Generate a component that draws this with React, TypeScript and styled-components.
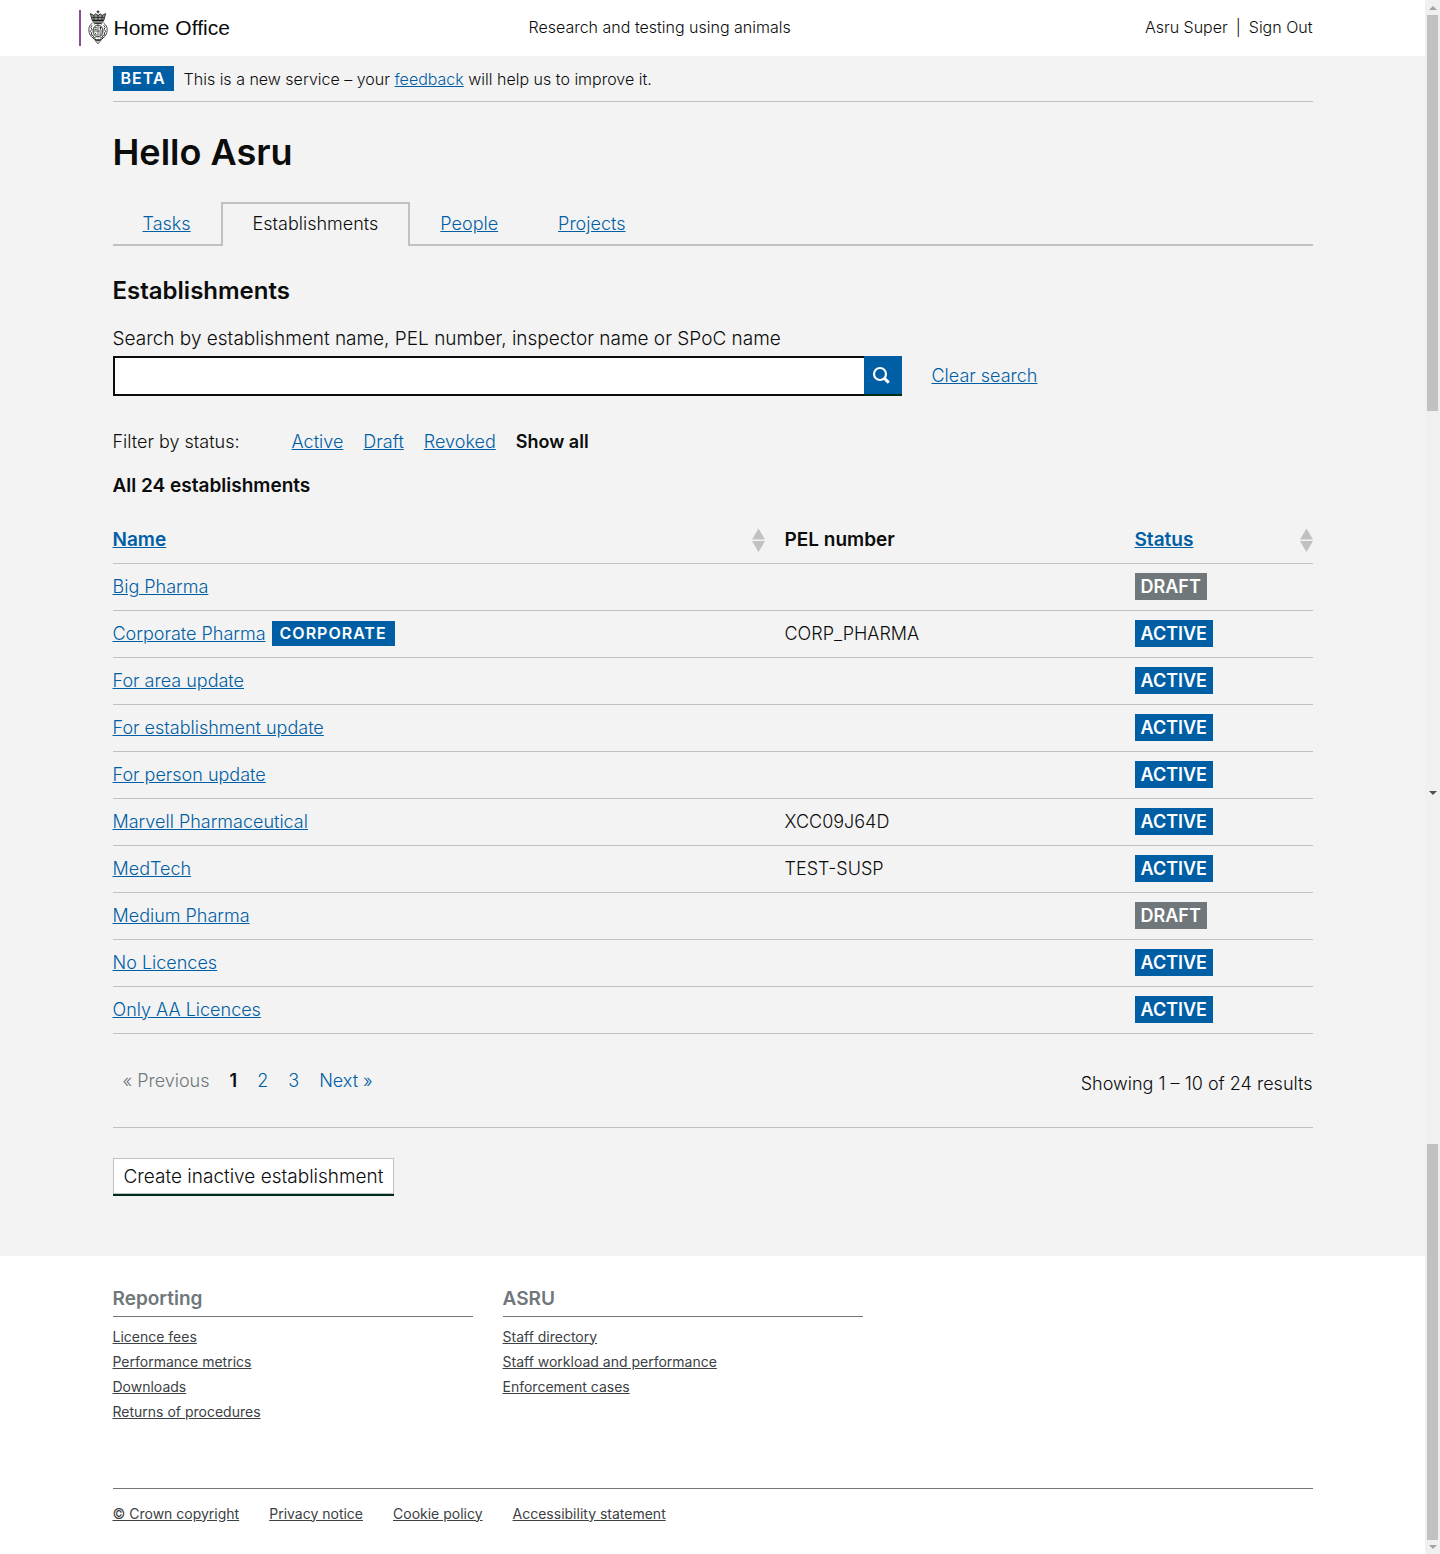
import React from "react";
import styled, { createGlobalStyle, css } from "styled-components";

const ink = "#0b0c0c";
const blue = "#005ea5";
const line = "#bfc1c3";
const grey = "#6f777b";
const canvas = "#f3f3f3";

const GlobalStyle = createGlobalStyle`
  *, *::before, *::after { box-sizing: border-box; }
  body {
    margin: 0;
    background: #fff;
    color: ${ink};
    font-family: Inter, "Liberation Sans", Arial, sans-serif;
    font-size: 18px;
    font-weight: 300;
    line-height: 26px;
  }
  h1, h2, h3, p, ul { margin: 0; padding: 0; }
  ul { list-style: none; }
`;

const Shell = styled.div`
  display: flex;
  align-items: stretch;
`;

const Page = styled.div`
  flex: 1;
  min-width: 0;
`;

const Container = styled.div`
  max-width: 1200px;
  margin: 0 auto;
`;

const Link = styled.a`
  color: ${blue};
  text-decoration: underline;
`;

const HeaderRow = styled(Container)`
  display: grid;
  grid-template-columns: repeat(3, 1fr);
  align-items: center;
  height: 56px;
  font-size: 16px;
`;

const Logo = styled.a`
  display: flex;
  align-items: center;
  gap: 6px;
  height: 36px;
  margin-left: -34px;
  padding-left: 7px;
  border-left: 2px solid #8f4a9e;
  color: ${ink};
  font-family: "Liberation Sans", Arial, sans-serif;
  font-size: 21px;
  text-decoration: none;
  white-space: nowrap;
`;

const ServiceName = styled.a`
  padding: 0 0 2px 16px;
  color: ${ink};
  text-decoration: none;
`;

const Account = styled.nav`
  display: flex;
  justify-content: flex-end;
  gap: 8px;
  padding-bottom: 2px;

  a {
    color: ${ink};
    text-decoration: none;
  }
`;

const Main = styled.main`
  background: ${canvas};
  padding-bottom: 62px;
`;

const PhaseBanner = styled.div`
  display: flex;
  align-items: center;
  gap: 10px;
  height: 46px;
  border-bottom: 1px solid ${line};
  font-size: 16px;
`;

const PhaseTag = styled.strong`
  display: inline-block;
  padding: 0 8px;
  background: ${blue};
  color: #fff;
  font-size: 16px;
  font-weight: 600;
  line-height: 25px;
  letter-spacing: 1px;
  text-transform: uppercase;
`;

const Title = styled.h1`
  margin-top: 30px;
  font-size: 36px;
  font-weight: 600;
  line-height: 40px;
`;

const Tabs = styled.ul`
  display: flex;
  margin-top: 30px;
  border-bottom: 2px solid ${line};
`;

const Tab = styled.li<{ $active?: boolean }>`
  height: 42px;
  padding: 0 30px;
  line-height: 43px;

  ${(p) =>
    p.$active &&
    css`
      height: 44px;
      margin-bottom: -2px;
      border: 2px solid ${line};
      border-bottom: 0;
      background: ${canvas};
      line-height: 40px;

      a {
        color: ${ink};
        text-decoration: none;
      }
    `}
`;

const SectionTitle = styled.h2`
  margin-top: 30px;
  font-size: 24px;
  font-weight: 600;
  line-height: 30px;
`;

const SearchLabel = styled.label`
  display: block;
  margin-top: 20px;
  font-size: 19px;
  line-height: 25px;
`;

const SearchRow = styled.form`
  display: flex;
  align-items: center;
  gap: 30px;
  margin-top: 5px;
`;

const SearchBox = styled.div`
  display: flex;
  width: 789px;
`;

const SearchInput = styled.input`
  flex: 1;
  min-width: 0;
  height: 40px;
  padding: 5px;
  border: 2px solid ${ink};
  border-right: 0;
  border-radius: 0;
  background: #fff;
  font: inherit;
`;

const SearchButton = styled.button`
  display: flex;
  align-items: center;
  width: 38px;
  height: 40px;
  padding: 0 0 0 8px;
  border: 0;
  border-bottom: 2px solid #002d18;
  background: ${blue};
  color: #fff;
`;

const Filters = styled.div`
  display: flex;
  gap: 52px;
  margin-top: 33px;
`;

const FilterList = styled.ul`
  display: flex;
  gap: 20px;

  strong {
    font-weight: 600;
  }
`;

const Count = styled.h3`
  margin-top: 18px;
  font-size: 19px;
  font-weight: 600;
  line-height: 25px;
`;

const Table = styled.table`
  width: 100%;
  margin-top: 19px;
  border-collapse: collapse;
  table-layout: fixed;
`;

const NameCol = styled.col`
  width: 56%;
`;

const StatusCol = styled.col`
  width: 178px;
`;

const Th = styled.th`
  height: 46px;
  padding: 1px 20px 0 0;
  border-bottom: 1px solid ${line};
  font-size: 19px;
  font-weight: 600;
  text-align: left;

  &:last-child {
    padding-right: 0;
  }
`;

const Sortable = styled.div`
  display: flex;
  align-items: center;
  justify-content: space-between;
`;

const Td = styled.td`
  height: 47px;
  padding: 0;
  border-bottom: 1px solid ${line};
`;

const NameCell = styled.div`
  display: flex;
  align-items: center;
  gap: 6px;
`;

const Badge = styled.span<{ $muted?: boolean }>`
  display: block;
  width: fit-content;
  padding: 0 6px;
  background: ${(p) => (p.$muted ? grey : blue)};
  color: #fff;
  font-weight: 600;
  line-height: 27px;
  text-transform: uppercase;
`;

const Paging = styled.div`
  display: flex;
  justify-content: space-between;
  margin-top: 34px;
  padding-bottom: 30px;
  border-bottom: 1px solid ${line};
`;

const Pages = styled.ul`
  display: flex;
  gap: 20px;
  padding-left: 10px;

  a {
    text-decoration: none;
  }

  strong {
    font-weight: 600;
  }
`;

const Disabled = styled.span`
  color: ${grey};
`;

const Results = styled.p`
  padding-top: 2px;
  line-height: 27px;
`;

const CreateButton = styled.button`
  display: block;
  height: 36px;
  margin-top: 30px;
  padding: 3px 10px 0;
  border: 1px solid ${line};
  background: #fff;
  box-shadow: 0 2px 0 #002d18;
  color: ${ink};
  font-family: inherit;
  font-size: 19px;
  font-weight: inherit;
  line-height: 30px;
`;

const FooterColumns = styled.div`
  display: grid;
  grid-template-columns: repeat(3, 1fr);
  gap: 30px;
  padding: 30px 60px 65px 0;
`;

const FooterHeading = styled.h2`
  padding-bottom: 5px;
  border-bottom: 1px solid ${grey};
  color: ${grey};
  font-size: 19px;
  font-weight: 600;
  line-height: 25px;
`;

const FooterLink = styled.a`
  color: #3c4144;
  font-size: 14px;
  font-weight: 400;
  text-decoration: underline;
`;

const FooterLinks = styled.ul`
  margin-top: 6px;

  li {
    height: 25px;
    line-height: 25px;
  }
`;

const Legal = styled.ul`
  display: flex;
  gap: 30px;
  padding: 11px 0 28px;
  border-top: 1px solid ${grey};
`;

const ScrollTrack = styled.div`
  display: flex;
  flex-direction: column;
  align-items: center;
  width: 15px;
  background: #f0f0f0;
`;

const ScrollThumb = styled.div`
  width: 11px;
  height: 396px;
  background: #c1c1c1;
`;

const ScrollGap = styled.div<{ $grow: number }>`
  flex: ${(p) => p.$grow};
`;

const ScrollArrow = styled.div<{ $up?: boolean; $dark?: boolean }>`
  display: flex;
  align-items: center;
  justify-content: center;
  height: 15px;

  &::before {
    content: "";
    border: 4px solid transparent;
    border-${(p) => (p.$up ? "top" : "bottom")}: 0;
    border-${(p) => (p.$up ? "bottom" : "top")}-color: ${(p) => (p.$dark ? "#505050" : "#a3a3a3")};
  }
`;

const Crest = () => (
  <svg width="20" height="36" viewBox="0 0 20 36" fill="none" stroke="#0b0c0c" aria-hidden="true">
    <path d="M10 0.5v3M8.6 1.8h2.8" strokeWidth="1" />
    <path d="M2.4 3.6l1.7 6.6h11.8l1.7-6.6-3.4 1.8-1.8-1.6L10 5.6 7.6 3.8 5.8 5.4z" fill="#999" strokeWidth="0.8" />
    <path d="M4 7.4h12M6 5.2v4.6M10 4.8v5M14 5.2v4.6" strokeWidth="0.7" />
    <path d="M4.3 10.8h11.4" strokeWidth="1.4" />
    <path d="M5 12.6h10" strokeWidth="0.6" />
    <path d="M6 14.2c1-1 2.4-1 4-.4 1.6-.6 3-.6 4 .4" strokeWidth="1" />
    <path d="M4.6 13C1.8 14.6.8 17.2.8 20c.1 4 1.9 6.6 4.6 8.2M15.4 13c2.8 1.6 3.8 4.2 3.8 7-.1 4-1.9 6.6-4.6 8.2" strokeWidth="0.7" />
    <path d="M4.2 15.2l-1.4 2.3 1.2 1.7-1.8 2.1 1.5 1.6-.6 2 2 .6.7 2 2 .5M15.8 15.2l1.4 2.3-1.2 1.7 1.8 2.1-1.5 1.6.6 2-2 .6-.7 2-2 .5" strokeWidth="0.8" />
    <ellipse cx="10" cy="21" rx="5" ry="6" fill="#eee" strokeWidth="0.8" />
    <path d="M10 15v12M5 21h10" strokeWidth="0.6" />
    <path d="M6.6 17.6h2.2M6.2 19.4h2.6M11.4 17.8h2.2M12.5 16.8v3M7 22.8l1.4 2.6M11.5 23h2.4M11.3 24.9h2" strokeWidth="0.7" />
    <path d="M4.6 27.6c1.6 2 3.4 2.2 5.4 2.2s3.8-.2 5.4-2.2M6.8 30.8h6.4M8.6 32.2L10 33.6l1.4-1.4" strokeWidth="1" />
  </svg>
);

const SearchIcon = () => (
  <svg width="20" height="20" viewBox="0 0 20 20" fill="none" stroke="currentColor" aria-hidden="true">
    <circle cx="8" cy="9" r="6" strokeWidth="2.2" />
    <path d="M12.2 13.2l4.6 4.4" strokeWidth="3" />
  </svg>
);

const SortIcon = () => (
  <svg width="13" height="24" viewBox="0 0 13 24" fill={line} aria-hidden="true">
    <path d="M6.5 0.5L13 11.5H0zM0 13h13L6.5 24z" />
  </svg>
);

type Establishment = { name: string; pel?: string; draft?: boolean; corporate?: boolean };

const establishments: Establishment[] = [
  { name: "Big Pharma", draft: true },
  { name: "Corporate Pharma", pel: "CORP_PHARMA", corporate: true },
  { name: "For area update" },
  { name: "For establishment update" },
  { name: "For person update" },
  { name: "Marvell Pharmaceutical", pel: "XCC09J64D" },
  { name: "MedTech", pel: "TEST-SUSP" },
  { name: "Medium Pharma", draft: true },
  { name: "No Licences" },
  { name: "Only AA Licences" },
];

const footerColumns = [
  { title: "Reporting", links: ["Licence fees", "Performance metrics", "Downloads", "Returns of procedures"] },
  { title: "ASRU", links: ["Staff directory", "Staff workload and performance", "Enforcement cases"] },
];

const legalLinks = ["© Crown copyright", "Privacy notice", "Cookie policy", "Accessibility statement"];

export default function App() {
  return (
    <>
      <GlobalStyle />
      <Shell>
        <Page>
          <header>
            <HeaderRow>
              <div>
                <Logo href="#">
                  <Crest />
                  Home Office
                </Logo>
              </div>
              <ServiceName href="#">Research and testing using animals</ServiceName>
              <Account>
                <a href="#">Asru Super</a>
                <span>|</span>
                <a href="#">Sign Out</a>
              </Account>
            </HeaderRow>
          </header>

          <Main>
            <Container>
              <PhaseBanner>
                <PhaseTag>Beta</PhaseTag>
                <span>
                  This is a new service – your <Link href="#">feedback</Link> will help us to improve it.
                </span>
              </PhaseBanner>

              <Title>Hello Asru</Title>

              <nav>
                <Tabs>
                  {["Tasks", "Establishments", "People", "Projects"].map((tab) => (
                    <Tab key={tab} $active={tab === "Establishments"}>
                      <Link href="#">{tab}</Link>
                    </Tab>
                  ))}
                </Tabs>
              </nav>

              <SectionTitle>Establishments</SectionTitle>
              <SearchLabel htmlFor="search">
                Search by establishment name, PEL number, inspector name or SPoC name
              </SearchLabel>
              <SearchRow onSubmit={(e) => e.preventDefault()}>
                <SearchBox>
                  <SearchInput id="search" type="text" />
                  <SearchButton type="submit" aria-label="Search">
                    <SearchIcon />
                  </SearchButton>
                </SearchBox>
                <Link href="#">Clear search</Link>
              </SearchRow>

              <Filters>
                <span>Filter by status:</span>
                <FilterList>
                  {["Active", "Draft", "Revoked"].map((status) => (
                    <li key={status}>
                      <Link href="#">{status}</Link>
                    </li>
                  ))}
                  <li>
                    <strong>Show all</strong>
                  </li>
                </FilterList>
              </Filters>

              <Count>All 24 establishments</Count>

              <Table>
                <colgroup>
                  <NameCol />
                  <col />
                  <StatusCol />
                </colgroup>
                <thead>
                  <tr>
                    <Th scope="col">
                      <Sortable>
                        <Link href="#">Name</Link>
                        <SortIcon />
                      </Sortable>
                    </Th>
                    <Th scope="col">PEL number</Th>
                    <Th scope="col">
                      <Sortable>
                        <Link href="#">Status</Link>
                        <SortIcon />
                      </Sortable>
                    </Th>
                  </tr>
                </thead>
                <tbody>
                  {establishments.map((row) => (
                    <tr key={row.name}>
                      <Td>
                        <NameCell>
                          <Link href="#">{row.name}</Link>
                          {row.corporate && <PhaseTag>Corporate</PhaseTag>}
                        </NameCell>
                      </Td>
                      <Td>{row.pel}</Td>
                      <Td>
                        <Badge $muted={row.draft}>{row.draft ? "Draft" : "Active"}</Badge>
                      </Td>
                    </tr>
                  ))}
                </tbody>
              </Table>

              <Paging>
                <Pages>
                  <li>
                    <Disabled>« Previous</Disabled>
                  </li>
                  <li>
                    <strong>1</strong>
                  </li>
                  <li>
                    <Link href="#">2</Link>
                  </li>
                  <li>
                    <Link href="#">3</Link>
                  </li>
                  <li>
                    <Link href="#">Next »</Link>
                  </li>
                </Pages>
                <Results>Showing 1 – 10 of 24 results</Results>
              </Paging>

              <CreateButton type="button">Create inactive establishment</CreateButton>
            </Container>
          </Main>

          <footer>
            <Container>
              <FooterColumns>
                {footerColumns.map((column) => (
                  <section key={column.title}>
                    <FooterHeading>{column.title}</FooterHeading>
                    <FooterLinks>
                      {column.links.map((label) => (
                        <li key={label}>
                          <FooterLink href="#">{label}</FooterLink>
                        </li>
                      ))}
                    </FooterLinks>
                  </section>
                ))}
              </FooterColumns>
              <Legal>
                {legalLinks.map((label) => (
                  <li key={label}>
                    <FooterLink href="#">{label}</FooterLink>
                  </li>
                ))}
              </Legal>
            </Container>
          </footer>
        </Page>

        <ScrollTrack aria-hidden="true">
          <ScrollArrow $up />
          <ScrollThumb />
          <ScrollGap $grow={12} />
          <ScrollArrow $dark />
          <ScrollGap $grow={11} />
          <ScrollThumb />
          <ScrollArrow />
        </ScrollTrack>
      </Shell>
    </>
  );
}
